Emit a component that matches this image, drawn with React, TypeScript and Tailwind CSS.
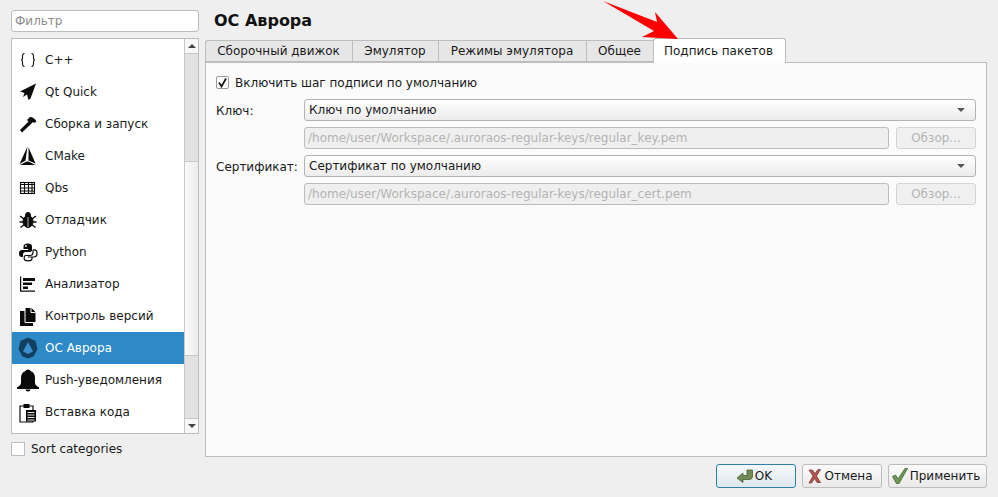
import React from 'react';

const BracesIcon = () => (
  <svg width="22" height="22" viewBox="0 0 22 22" fill="none" stroke="#111" strokeWidth="1.100">
    <path d="M7.500 4.500c-2 0-2 .8-2 2.500v2c0 1.300-.8 2-1.500 2 .7 0 1.500.7 1.500 2v2c0 1.700 0 2.500 2 2.500" />
    <path d="M14.500 4.500c2 0 2 .8 2 2.500v2c0 1.300.8 2 1.500 2-.7 0-1.500.7-1.500 2v2c0 1.700 0 2.500-2 2.500" />
  </svg>
);

const PlaneIcon = () => (
  <svg width="22" height="22" viewBox="0 0 22 22" fill="#0a0a0a">
    <path d="M19 2.500 3 10.500l4.500 1.500-1.500 4 4-2.500 1.500 5.500 2-1.500Z" />
  </svg>
);

const HammerIcon = () => (
  <svg width="22" height="22" viewBox="0 0 22 22" fill="#0a0a0a">
    <path d="M3 17 11.500 8.500 10 7l3-3c2.500 0 5 1.500 6.500 4.500L17 10l-1-1-1.500 1.500L5 19.500Z" />
  </svg>
);

const CmakeIcon = () => (
  <svg width="22" height="22" viewBox="0 0 22 22" fill="#0a0a0a">
    <path d="M10.500 1.500 2.500 19l6-3.500Z" />
    <path d="M11.500 2.500 18.500 18.500l-7-3Z" />
    <path d="M9.500 16.500h2l7 3.500H3Z" />
  </svg>
);

const GridIcon = () => (
  <svg width="22" height="22" viewBox="0 0 22 22" fill="none" stroke="#0a0a0a" strokeWidth="1.100">
    <rect x="3.500" y="5.500" width="14" height="11" />
    <path d="M3.500 7.500h14M3.500 11h14M3.500 14h14M7.500 5.500v11M11.500 5.500v11M15 5.500v11" />
  </svg>
);

const BugIcon = () => (
  <svg width="22" height="22" viewBox="0 0 22 22" fill="#0a0a0a" stroke="#0a0a0a">
    <ellipse cx="11" cy="12.500" rx="5" ry="6" />
    <circle cx="11" cy="6" r="2.500" />
    <path d="M3 7l4 3M19 7l-4 3M2.500 13h4M19.500 13h-4M3.500 18.500l4-3M18.500 18.500l-4-3" fill="none" strokeWidth="1.400" />
    <path d="M11 8v10" stroke="#fff" strokeWidth="0.700" />
  </svg>
);

const PythonIcon = () => (
  <svg width="22" height="22" viewBox="0 0 22 22">
    <path d="M11 2.500c-3 0-4.500 1-4.500 3V8H11v1H5c-2 0-3 1.500-3 3.500s1 3.500 2.500 3.500H6v-2.500c0-1.500 1-2.500 2.500-2.500h4.500c1.300 0 2-.8 2-2V5.500c0-2-1.500-3-4-3Z" fill="#0a0a0a" />
    <circle cx="9" cy="5" r="0.900" fill="#fff" />
    <path d="M16 9v2.500c0 2-1.300 3-3 3H9c-1 0-1.800.7-1.800 1.800v1.500c0 1.300 1.600 2 3.800 2s4-.7 4-2v-1.800h-4.200M16 8.800h1.500c1.700 0 2.500 1.500 2.500 3.500s-1 3.700-3 3.700H15" fill="none" stroke="#0a0a0a" strokeWidth="1.200" />
  </svg>
);

const AnalyzerIcon = () => (
  <svg width="22" height="22" viewBox="0 0 22 22" fill="#0a0a0a">
    <path d="M3 3.500h1.200V17.500H18v1.200H3Z" />
    <rect x="6" y="5" width="12" height="3" />
    <rect x="6" y="9.500" width="9" height="2.500" />
    <rect x="6" y="13.500" width="5" height="2.500" />
  </svg>
);

const FilesIcon = () => (
  <svg width="22" height="22" viewBox="0 0 22 22" fill="#0a0a0a">
    <rect x="3" y="6" width="13" height="15" />
    <path d="M8 2.500h6.500l4.500 4.500v10.500H8Z" stroke="#fff" strokeWidth="1" />
    <path d="M14 3v4.500h4.500" fill="none" stroke="#fff" strokeWidth="1" />
  </svg>
);

const AuroraIcon = () => (
  <svg width="24" height="24" viewBox="0 0 24 24">
    <path d="M12 1.500 19.500 5 21.500 13 17.500 20.500 12 22.500 6.500 20.500 2.500 13 4.500 5Z" fill="#123f5f" />
    <path d="M12 6 17 15.500 12 18 7 15.500Z" fill="#3b8fd0" />
  </svg>
);

const BellIcon = () => (
  <svg width="24" height="24" viewBox="0 0 24 24" fill="#0a0a0a">
    <path d="M12 1.500c1.500 0 2.200.8 2.500 1.500 3 1 4.500 3.500 4.500 7v5c0 2 2 3 4 4.500v1.500H1v-1.500c2-1.500 4-2.500 4-4.500v-5c0-3.500 1.500-6 4.500-7 .3-.7 1-1.500 2.500-1.500Z" />
    <path d="M9.500 21.500h5c0 1.200-1 2-2.500 2s-2.500-.8-2.500-2Z" />
  </svg>
);

const ClipboardIcon = () => (
  <svg width="22" height="22" viewBox="0 0 22 22">
    <path d="M3 5h13v16H3Z" fill="#fff" stroke="#0a0a0a" strokeWidth="1.200" />
    <rect x="6.500" y="3" width="6" height="4" fill="#0a0a0a" />
    <rect x="9" y="9" width="10" height="11.500" fill="#0a0a0a" />
    <path d="M10.500 11.500h7M10.500 14h7M10.500 16.500h7M10.500 19h7" stroke="#fff" strokeWidth="0.900" />
  </svg>
);

const categories = [
  { label: 'C++', icon: <BracesIcon /> },
  { label: 'Qt Quick', icon: <PlaneIcon /> },
  { label: 'Сборка и запуск', icon: <HammerIcon /> },
  { label: 'CMake', icon: <CmakeIcon /> },
  { label: 'Qbs', icon: <GridIcon /> },
  { label: 'Отладчик', icon: <BugIcon /> },
  { label: 'Python', icon: <PythonIcon /> },
  { label: 'Анализатор', icon: <AnalyzerIcon /> },
  { label: 'Контроль версий', icon: <FilesIcon /> },
  { label: 'ОС Аврора', icon: <AuroraIcon />, active: true },
  { label: 'Push-уведомления', icon: <BellIcon /> },
  { label: 'Вставка кода', icon: <ClipboardIcon /> },
];

const tabs = [
  { label: 'Сборочный движок', width: 'w-[147px]' },
  { label: 'Эмулятор', width: 'w-[86px]' },
  { label: 'Режимы эмулятора', width: 'w-[148px]' },
  { label: 'Общее', width: 'w-[67px]' },
];

const Select = ({ value }: { value: string }) => (
  <div className="flex-1 h-[22px] flex items-center justify-between pl-[4px] pr-[10px] border border-[#b3b3b3] rounded-[3px] bg-gradient-to-b from-white to-[#ececec] text-[#1a1a1a]">
    <span>{value}</span>
    <span className="w-0 h-0 border-l-[4px] border-r-[4px] border-t-[4px] border-l-transparent border-r-transparent border-t-[#555]" />
  </div>
);

const PathRow = ({ value }: { value: string }) => (
  <div className="flex gap-[7px] ml-[88px]">
    <div className="flex-1 h-[22px] flex items-center pl-[3px] border border-[#bcbcbc] rounded-[3px] bg-[#efefef] text-[#b4b4b4]">
      {value}
    </div>
    <div className="w-[80px] h-[22px] flex items-center justify-center border border-[#d4d4d4] rounded-[3px] bg-[#f0f0f0] text-[#b4b4b4]">
      Обзор...
    </div>
  </div>
);

const FormRow = ({ label, value }: { label: string; value: string }) => (
  <div className="flex items-center">
    <div className="w-[88px] pt-[1px]">{label}</div>
    <Select value={value} />
  </div>
);

const Button = ({ icon, label, primary, width }: { icon: React.ReactNode; label: string; primary?: boolean; width: string }) => (
  <div className={`${width} h-[24px] flex items-center justify-center gap-[1px] pr-[4px] rounded-[3px] border bg-gradient-to-b ${primary ? 'border-[#2f7fab] from-[#f5f8fa] to-[#dfe8ee]' : 'border-[#bdbdbd] from-[#fbfbfb] to-[#e9e9e9]'}`}>
    {icon}
    <span>{label}</span>
  </div>
);

export default function App() {
  return (
    <div className="relative w-[998px] h-[497px] overflow-hidden bg-[#efefef] text-[12px] text-[#1a1a1a] font-['DejaVu_Sans',sans-serif]">
      <div className="flex h-full pt-[10px] pl-[11px] pr-[11px]">
        {/* Left column */}
        <div className="w-[188px] mr-[6px] flex flex-col">
          <div className="h-[22px] flex items-center pl-[3px] border border-[#bcbcbc] rounded-[3px] bg-white text-[#8c8c8c]">
            Фильтр
          </div>
          <div className="mt-[6px] h-[396px] flex border border-[#bdbdbd] bg-white">
            <div className="flex-1 pt-[5px]">
              {categories.map((c) => (
                <div key={c.label} className={`h-[32px] flex items-center ${c.active ? 'bg-[#2d8ac7] text-white' : ''}`}>
                  <div className="w-[31px] mr-[2px] flex justify-center shrink-0">{c.icon}</div>
                  <span>{c.label}</span>
                </div>
              ))}
            </div>
            <div className="w-[14px] flex flex-col bg-[#e2e2e2] border-l border-[#c8c8c8]">
              <div className="h-[15px] flex items-center justify-center bg-[#f7f7f7] border-b border-[#c8c8c8]">
                <span className="w-0 h-0 border-l-[4px] border-r-[4px] border-b-[4px] border-l-transparent border-r-transparent border-b-[#444]" />
              </div>
              <div className="mt-[107px] h-[195px] bg-gradient-to-r from-[#fafafa] to-[#ececec] border-y border-[#c8c8c8]" />
              <div className="mt-auto h-[15px] flex items-center justify-center bg-[#f7f7f7] border-t border-[#c8c8c8]">
                <span className="w-0 h-0 border-l-[4px] border-r-[4px] border-t-[4px] border-l-transparent border-r-transparent border-t-[#444]" />
              </div>
            </div>
          </div>
          <div className="mt-[6px] flex items-center gap-[6px]">
            <span className="w-[14px] h-[14px] border border-[#bdbdbd] bg-white" />
            <span>Sort categories</span>
          </div>
        </div>

        {/* Right column */}
        <div className="flex-1 flex flex-col">
          <div className="h-[30px] pl-[9px] flex items-center pb-[10px] pt-[1px] text-[16px] font-bold text-[#111]">ОС Аврора</div>
          <div className="h-[22px] flex items-end relative z-10">
            {tabs.map((t) => (
              <div key={t.label} className={`${t.width} h-[22px] flex items-center justify-center pr-[1px] border border-[#bdbdbd] border-r-0 first:rounded-tl-[3px] bg-[#e6e6e6]`}>
                {t.label}
              </div>
            ))}
            <div className="w-[133px] h-[25px] -mb-[1px] flex items-center justify-center pr-[2px] border border-[#bdbdbd] border-b-0 rounded-t-[3px] bg-white">
              Подпись пакетов
            </div>
          </div>
          <div className="h-[395px] flex flex-col gap-[6px] px-[10px] pt-[11px] border border-[#bdbdbd] bg-[#fbfbfb]">
            <div className="flex items-center gap-[6px] h-[17px] mb-[2px]">
              <span className="w-[13px] h-[13px] flex items-center justify-center border border-[#9a9a9a] rounded-[2px] bg-white">
                <svg width="11" height="11" viewBox="0 0 11 11" fill="none" stroke="#111" strokeWidth="1.700">
                  <path d="M2 5.500 4.500 9.500 9 1.500" />
                </svg>
              </span>
              <span>Включить шаг подписи по умолчанию</span>
            </div>
            <FormRow label="Ключ:" value="Ключ по умолчанию" />
            <PathRow value="/home/user/Workspace/.auroraos-regular-keys/regular_key.pem" />
            <FormRow label="Сертификат:" value="Сертификат по умолчанию" />
            <PathRow value="/home/user/Workspace/.auroraos-regular-keys/regular_cert.pem" />
          </div>
          <div className="mt-[7px] flex justify-end gap-[6px]">
            <Button
              primary
              width="w-[80px]"
              label="OK"
              icon={
                <svg width="18" height="16" viewBox="0 0 18 16">
                  <path d="M1 10 7 5v2.500h4V2h5.500v6.500c0 1.500-1 3-3 3H7V14.500Z" fill="#6f8a52" stroke="#48602f" strokeWidth="0.800" />
                </svg>
              }
            />
            <Button
              width="w-[80px]"
              label="Отмена"
              icon={
                <svg width="16" height="16" viewBox="0 0 16 16">
                  <path d="M2 2h3.500L8 5.500 11 1.500h2.500L9.500 8l4 6.500H10L7.500 10.500 4.500 15H2l4-7Z" fill="#b5544f" stroke="#6f3531" strokeWidth="0.700" />
                </svg>
              }
            />
            <Button
              width="w-[99px]"
              label="Применить"
              icon={
                <svg width="18" height="18" viewBox="0 0 18 18">
                  <path d="M1.500 9.500 4.500 8l2.500 4L14 1.500h2.500L8 16.500H5.500Z" fill="#6f9a55" stroke="#3f5f2c" strokeWidth="0.800" />
                </svg>
              }
            />
          </div>
        </div>
      </div>

      {/* Red annotation arrow */}
      <svg className="absolute left-0 top-0 z-20" width="998" height="497" fill="#fe0000">
        <path d="M603 1 657 22 655 12 678 39 642 37 654 31Z" />
      </svg>
    </div>
  );
}
